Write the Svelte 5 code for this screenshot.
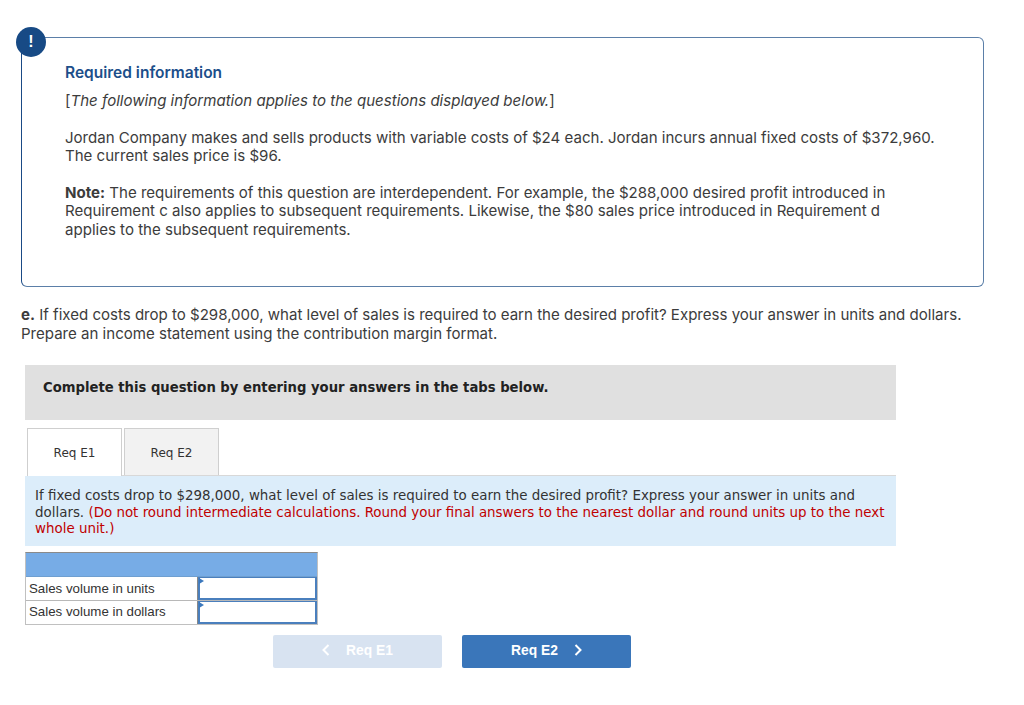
<script>
  let rows = ['Sales volume in units', 'Sales volume in dollars'];
</script>

<div class="page">
  <div class="info">
    <span class="badge">!</span>
    <h2>Required information</h2>
    <p class="lead">[<i>The following information applies to the questions displayed below.</i>]</p>
    <p class="facts">Jordan Company makes and sells products with variable costs of $24 each. Jordan incurs annual fixed costs of $372,960.<br />The current sales price is $96.</p>
    <p class="note"><b>Note:</b> The requirements of this question are interdependent. For example, the $288,000 desired profit introduced in<br />Requirement c also applies to subsequent requirements. Likewise, the $80 sales price introduced in Requirement d<br />applies to the subsequent requirements.</p>
  </div>

  <p class="question"><b>e.</b> If fixed costs drop to $298,000, what level of sales is required to earn the desired profit? Express your answer in units and dollars.<br />Prepare an income statement using the contribution margin format.</p>

  <div class="work">
    <div class="banner">Complete this question by entering your answers in the tabs below.</div>

    <div class="tabs">
      <div class="tab active">Req E1</div>
      <div class="tab">Req E2</div>
    </div>

    <div class="prompt">If fixed costs drop to $298,000, what level of sales is required to earn the desired profit? Express your answer in units and dollars. <span class="red">(Do not round intermediate calculations. Round your final answers to the nearest dollar and round units up to the next whole unit.)</span></div>

    <div class="sheet">
      <div class="head"></div>
      {#each rows as row}
        <div class="row">
          <div class="label">{row}</div>
          <div class="cell"><span class="mark"></span></div>
        </div>
      {/each}
    </div>

    <div class="nav">
      <button class="btn off">
        <svg width="8" height="12" viewBox="0 0 8 12"><path d="M6.5 1 L1.5 6 L6.5 11" /></svg>
        <span>Req E1</span>
      </button>
      <button class="btn">
        <span>Req E2</span>
        <svg width="8" height="12" viewBox="0 0 8 12"><path d="M1.5 1 L6.5 6 L1.5 11" /></svg>
      </button>
    </div>
  </div>
</div>

<style>
  :global(body) {
    background: #fff;
  }

  .page {
    width: 1024px;
    height: 705px;
    box-sizing: border-box;
    padding: 37px 40px 0 21px;
    font-family: Inter, sans-serif;
    color: #3c3c3c;
    overflow: hidden;
  }

  .info {
    position: relative;
    box-sizing: border-box;
    height: 250px;
    padding: 26px 30px 0 43px;
    border: 1px solid #5b7fa8;
    border-left-color: #1a4a85;
    border-radius: 0 6px 6px 6px;
  }

  .badge {
    position: absolute;
    left: -6px;
    top: -11px;
    width: 30px;
    height: 30px;
    border-radius: 50%;
    background: #174a85;
    color: #fff;
    font: bold 16px/30px 'Liberation Sans', sans-serif;
    text-align: center;
  }

  h2 {
    margin: 0;
    font-size: 15.5px;
    line-height: 18px;
    font-weight: 600;
    color: #1c4f8a;
  }

  p {
    margin: 0;
    font-size: 15.05px;
    line-height: 18.5px;
  }

  .lead {
    margin-top: 10px;
  }

  .facts {
    margin-top: 18px;
  }

  .note {
    margin-top: 18px;
  }

  .question {
    margin-top: 19px;
  }

  .work {
    width: 871px;
    margin-left: 4px;
    margin-top: 22px;
  }

  .banner {
    height: 55px;
    box-sizing: border-box;
    padding-left: 18px;
    background: #e0e0e0;
    color: #222;
    font: bold 13.2px/46px 'DejaVu Sans', sans-serif;
  }

  .tabs {
    display: flex;
    gap: 2px;
    margin-top: 8px;
    margin-left: 2px;
    height: 47px;
    border-bottom: 1px solid #d8d8d8;
  }

  .tab {
    width: 95px;
    box-sizing: border-box;
    border: 1px solid #cfcfcf;
    border-bottom: 0;
    background: #f2f2f2;
    color: #333;
    font: 12px/48px 'DejaVu Sans', sans-serif;
    text-align: center;
  }

  .tab.active {
    background: #fff;
    margin-bottom: -1px;
  }

  .prompt {
    height: 70px;
    box-sizing: border-box;
    padding: 12px 6px 0 10px;
    background: #dcedfa;
    color: #333;
    font: 13.42px/16.5px 'DejaVu Sans', sans-serif;
  }

  .red {
    color: #c00000;
  }

  .sheet {
    width: 291px;
    margin-top: 6px;
    border: 1px solid #c0c0c0;
    border-top-color: #8a8a8a;
    font: 13.3px/23px 'Liberation Sans', sans-serif;
    color: #333;
  }

  .head {
    height: 23px;
    background: #77ace6;
    border-bottom: 1px solid #6f9fd0;
  }

  .row {
    display: flex;
    height: 23px;
  }

  .row + .row {
    border-top: 1px solid #b8b8b8;
    line-height: 22px;
  }

  .label {
    width: 172px;
    padding-left: 3px;
    box-sizing: border-box;
    border-right: 1px solid #888;
  }

  .cell {
    position: relative;
    flex: 1;
    border: 2px solid #4a7fbd;
    border-top-width: 1px;
    background: #fff;
  }

  .mark {
    position: absolute;
    left: -1px;
    top: 0;
    border-left: 5px solid #3b78bd;
    border-top: 3px solid transparent;
    border-bottom: 3px solid transparent;
  }

  .nav {
    display: flex;
    gap: 20px;
    margin-top: 10px;
    margin-left: 248px;
  }

  .btn {
    display: flex;
    align-items: center;
    justify-content: center;
    gap: 16px;
    width: 169px;
    height: 33px;
    border: 0;
    border-radius: 2px;
    padding: 0 0 3px;
    background: #3a76ba;
    color: #fff;
    font: bold 13.8px 'Liberation Sans', sans-serif;
  }

  .btn.off {
    background: #d8e3f1;
  }

  .btn svg path {
    fill: none;
    stroke: #fff;
    stroke-width: 2;
  }
</style>
